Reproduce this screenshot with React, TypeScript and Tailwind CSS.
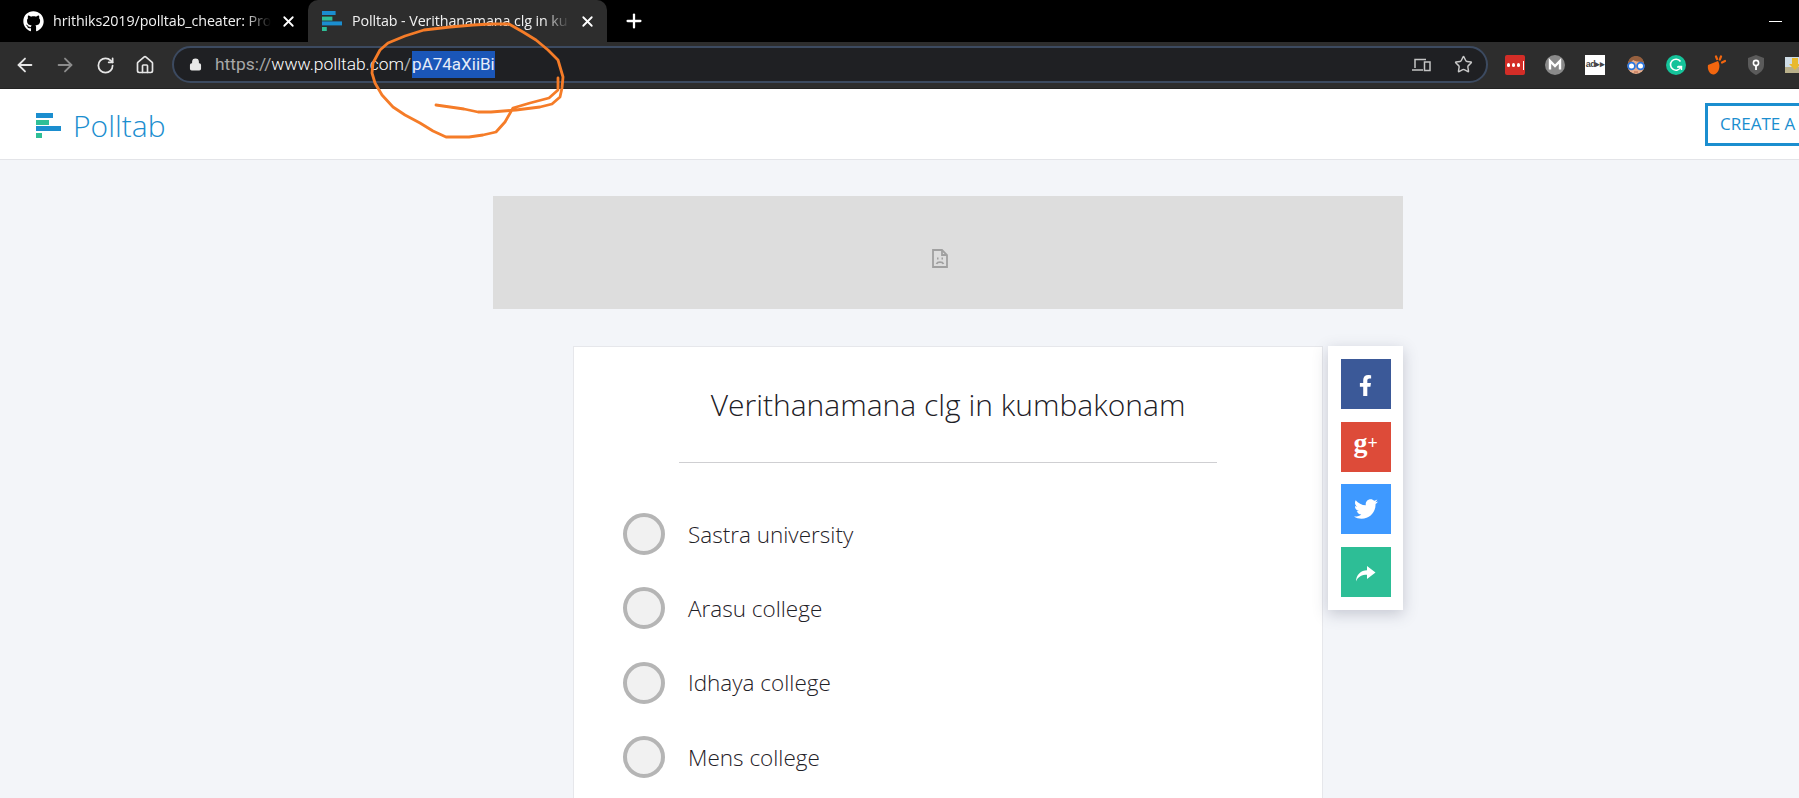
import { ArrowLeft, ArrowRight, RotateCw, Home, Lock, Plus, X, Star } from 'lucide-react';
import { FaGithub, FaFacebookF, FaTwitter } from 'react-icons/fa';

const OPTIONS = ['Sastra university', 'Arasu college', 'Idhaya college', 'Mens college'];

function Logo({ scale = 1 }: { scale?: number }) {
  return (
    <svg width={25 * scale} height={25 * scale} viewBox="0 0 25 25" className="shrink-0">
      <rect x="0" y="0" width="17" height="5" fill="#1b8ecf" />
      <rect x="0" y="7" width="13" height="5" fill="#2fbf97" />
      <rect x="0" y="13" width="25" height="5" fill="#1b8ecf" />
      <rect x="0" y="20" width="6" height="5" fill="#2fbf97" />
    </svg>
  );
}

function Tab({ icon, title, active }: { icon: React.ReactNode; title: string; active?: boolean }) {
  return (
    <div
      className={`relative flex items-center h-[42px] ${
        active ? 'w-[299px] pl-[14px] pr-[11px] bg-[#2d2d2d] rounded-t-[10px]' : 'w-[308px] pl-[15px] pr-[11px]'
      }`}
    >
      <div className={`shrink-0 flex items-center ${active ? 'w-[30px]' : 'w-[38px]'}`}>{icon}</div>
      <div className="flex-1 whitespace-nowrap text-[14.3px] text-[#f1f1f1] tracking-[-0.1px] [mask-image:linear-gradient(to_right,black_88%,transparent)]">
        {title}
      </div>
      <X size={17} strokeWidth={2.5} className="ml-[9px] text-white shrink-0" />
    </div>
  );
}

function Extensions() {
  return (
    <div className="flex items-center h-full">
      {/* lastpass */}
      <div className="w-[40px] flex justify-center">
        <div className="w-[20px] h-[20px] rounded-[2px] bg-[#d32d27] flex items-center justify-center gap-[1.5px]">
          <span className="w-[3.5px] h-[3.5px] rounded-full bg-white" />
          <span className="w-[3.5px] h-[3.5px] rounded-full bg-white" />
          <span className="w-[3.5px] h-[3.5px] rounded-full bg-white" />
          <span className="w-[1px] h-[9px] ml-[1px] bg-white" />
        </div>
      </div>
      {/* mega */}
      <div className="w-[40px] flex justify-center">
        <svg width="20" height="20" viewBox="0 0 20 20">
          <circle cx="10" cy="10" r="10" fill="#8a8a8a" />
          <path d="M5 14.5V6l5 5 5-5v8.5" fill="none" stroke="#fff" strokeWidth="2.4" />
        </svg>
      </div>
      {/* adblock */}
      <div className="w-[40px] flex justify-center">
        <div className="w-[20px] h-[20px] bg-white flex items-center justify-center overflow-hidden text-[9px] font-bold text-[#444] tracking-[-0.5px] font-['Liberation_Sans',sans-serif]">
          ad▸▸
        </div>
      </div>
      {/* glasses face */}
      <div className="w-[42px] flex justify-center">
        <svg width="20" height="20" viewBox="0 0 20 20">
          <circle cx="10" cy="10.5" r="8.5" fill="#e9ae8c" />
          <path d="M2 10C2 3 6 1 10 1s8 2 8 9l-2-3c-3 0-8-1-9-2-1 2-3 2-5 5z" fill="#96603f" />
          <circle cx="5.5" cy="11" r="3.4" fill="#fff" stroke="#2a76e0" strokeWidth="1.8" />
          <circle cx="14.5" cy="11" r="3.4" fill="#fff" stroke="#2a76e0" strokeWidth="1.8" />
          <path d="M8 17h4" stroke="#b5654a" strokeWidth="1" />
        </svg>
      </div>
      {/* grammarly */}
      <div className="w-[38px] flex justify-center">
        <svg width="20" height="20" viewBox="0 0 20 20">
          <circle cx="10" cy="10" r="10" fill="#15c39a" />
          <path d="M14.5 6.5A5.5 5.5 0 1 0 15 12h-4" fill="none" stroke="#fff" strokeWidth="1.6" />
          <path d="M15.5 15v-3.5H12" fill="none" stroke="#fff" strokeWidth="1.4" />
        </svg>
      </div>
      {/* shout */}
      <div className="w-[42px] flex justify-center">
        <svg width="19" height="20" viewBox="0 0 19 20">
          <path d="M1 10 L11 6 C14 11 12 18 7 19.5 C3 20 0 15 1 10Z" fill="#f2660f" />
          <path d="M9 1.5l1 2.5M14 1.5l-1.2 3M18 6l-3 1.5" stroke="#f2660f" strokeWidth="2.2" strokeLinecap="round" />
        </svg>
      </div>
      {/* shield */}
      <div className="w-[38px] flex justify-center">
        <svg width="18" height="20" viewBox="0 0 18 20">
          <path d="M9 0l8 3v7c0 5-4 8-8 10-4-2-8-5-8-10V3z" fill="#5b5b5b" />
          <circle cx="9" cy="8" r="2.6" fill="none" stroke="#fff" strokeWidth="1.6" />
          <path d="M9 10.5V15" stroke="#fff" strokeWidth="1.8" />
        </svg>
      </div>
      {/* picture download */}
      <div className="w-[36px] flex justify-start pl-[10px]">
        <svg width="20" height="16" viewBox="0 0 20 16" className="shrink-0">
          <rect width="20" height="16" fill="#cfdde6" />
          <rect y="10" width="20" height="6" fill="#b9b08a" />
          <path d="M7 1h6v6h3l-6 6-6-6h3z" fill="#e8b92e" />
        </svg>
      </div>
    </div>
  );
}

function Annotation() {
  return (
    <svg className="absolute left-0 top-0 pointer-events-none" width="600" height="150" fill="none">
      <polyline
        points="558,78 558,90 549,98 530,103 513,108 505,122 496,132 483,135 469,137 446,137 433,131 420,123 405,115 393,107 382,95 375,83 372,73 373,63 380,50 388,43 405,36 424,30 450,27 473,25 490,24 509,24 523,32 536,40 548,50 558,60 563,77 562,88 560,97 552,104 540,107 516,110 491,112 478,112 464,109 450,107 436,105"
        stroke="#f57c28"
        strokeWidth="2.8"
        strokeLinejoin="round"
        strokeLinecap="round"
      />
    </svg>
  );
}

function ShareButton({ color, children }: { color: string; children: React.ReactNode }) {
  return <div className={`w-[50px] h-[50px] flex items-center justify-center text-white ${color}`}>{children}</div>;
}

export default function App() {
  return (
    <div className="relative h-screen overflow-hidden bg-[#f3f5f9] font-['Open_Sans',sans-serif]">
      {/* Browser chrome */}
      <div className="h-[42px] bg-black flex items-center">
        <Tab icon={<FaGithub size={21} className="text-white ml-[8px]" />} title="hrithiks2019/polltab_cheater: Pro" />
        <Tab active icon={<Logo scale={0.8} />} title="Polltab - Verithanamana clg in ku" />
        <Plus size={22} strokeWidth={2.5} className="ml-[16px] text-white" />
        <div className="ml-auto mr-[17px] w-[13px] h-[1px] bg-white" />
      </div>
      <div className="h-[47px] bg-[#2d2d2d] border-b border-[#232323] flex items-center pl-[14px] font-['Roboto',sans-serif] overflow-hidden">
        <ArrowLeft size={22} strokeWidth={2} className="shrink-0 text-[#e6e6e6]" />
        <ArrowRight size={22} strokeWidth={2} className="shrink-0 ml-[18px] text-[#8c8c8c]" />
        <RotateCw size={19} strokeWidth={2.2} className="shrink-0 ml-[20px] text-[#e6e6e6]" />
        <Home size={20} strokeWidth={2} className="shrink-0 ml-[20px] text-[#e6e6e6]" />
        <div className="shrink-0 ml-[17px] w-[1316px] h-[37px] -mt-[1px] rounded-full bg-[#1f2023] border-[2px] border-[#3c4a60] flex items-center pl-[15px] pr-[12px]">
          <Lock size={13} strokeWidth={2.5} fill="#e8e8e8" className="text-[#e8e8e8]" />
          <span className="ml-[13px] text-[17.4px] text-[#a8a8a8] whitespace-nowrap">https://</span>
          <span className="text-[17.4px] text-white font-light whitespace-nowrap">www.polltab.com</span>
          <span className="text-[17.4px] text-[#a8a8a8]">/</span>
          <span className="ml-[1px] h-[27px] leading-[27px] bg-[#1a56b8] text-[17px] text-[#e6ecf8] whitespace-nowrap">pA74aXiiBi</span>
          <svg width="19" height="14" viewBox="0 0 19 14" fill="none" stroke="#c4c4c4" strokeWidth="1.5" className="ml-auto mr-[23px]">
            <path d="M3 10V1.5h11M0 12h11" />
            <rect x="12.5" y="4" width="5.5" height="8.5" />
          </svg>
          <Star size={19} strokeWidth={1.8} className="text-[#c8c8c8] mr-[1px]" />
        </div>
        <div className="shrink-0 ml-[7px] h-full">
          <Extensions />
        </div>
      </div>

      {/* Page */}
      <div className="w-[1896px]">
        <header className="h-[71px] bg-white border-b border-[#e3e4e8] flex items-center pl-[36px]">
          <div className="flex items-center pt-[3px]">
            <Logo />
            <span className="ml-[12px] text-[30px] font-light text-[#1b8ecf] leading-none">Polltab</span>
          </div>
          <div className="ml-auto mr-[31px] w-[160px] h-[43px] border-[3px] border-[#1b8ecf] flex items-center px-[12px] text-[17px] text-[#1b8ecf] whitespace-nowrap">
            CREATE A
          </div>
        </header>

        <main className="mt-[36px] w-[910px] mx-auto">
          <div className="h-[113px] bg-[#dddddd] flex items-center justify-center pt-[12px] pr-[16px]">
            <svg width="16" height="19" viewBox="0 0 16 19" fill="none" stroke="#a0a0a0" strokeWidth="1.8">
              <path d="M1 1h9l5 5v12H1z" />
              <path d="M10 1v5h5" />
              <path d="M4.5 15c1-2.4 6-2.4 7 0" />
              <path d="M5 9.5h1.5M9.5 9.5H11" />
            </svg>
          </div>

          <div className="mt-[37px] pl-[80px] flex items-start gap-[5px]">
            <div className="w-[751px] h-[600px] bg-white border border-[#e6e7eb] pt-[36px] px-[105px]">
              <h1 className="text-center text-[30px] leading-[44px] font-light text-[#1d2026] whitespace-nowrap">
                Verithanamana clg in kumbakonam
              </h1>
              <div className="mt-[35px] h-[1px] bg-[#cfcfd2]" />
              <div className="mt-[50px] -ml-[56px] flex flex-col gap-[32.4px]">
                {OPTIONS.map((option) => (
                  <div key={option} className="flex items-center h-[42px]">
                    <span className="w-[42px] h-[42px] rounded-full bg-[#f1f1f1] border-[4px] border-[#b5b5b5] shrink-0" />
                    <span className="ml-[23px] pt-[1px] text-[22.5px] font-light text-[#1f2127] whitespace-nowrap">{option}</span>
                  </div>
                ))}
              </div>
            </div>

            <div className="w-[75px] h-[264px] bg-white shadow-[0_4px_14px_rgba(60,64,90,0.25)] pt-[13px] flex flex-col items-center gap-[12.5px]">
              <ShareButton color="bg-[#3b5998]">
                <FaFacebookF size={21} className="mt-[3px]" />
              </ShareButton>
              <ShareButton color="bg-[#dd4b39]">
                <span className="flex items-start font-['Liberation_Serif',serif] font-bold leading-none">
                  <span className="text-[28px] -mt-[8px]">g</span>
                  <span className="text-[18px] -mt-[3px]">+</span>
                </span>
              </ShareButton>
              <ShareButton color="bg-[#3e99ff]">
                <FaTwitter size={24} />
              </ShareButton>
              <ShareButton color="bg-[#2dbe96]">
                <svg width="20" height="16" viewBox="0 0 20 16" fill="currentColor" className="mt-[4px]">
                  <path d="M11 0L19.5 6.5 11 13V8.8C6 8.8 2 10.5 0 15.5 0 9 5 4.2 11 4.2Z" />
                </svg>
              </ShareButton>
            </div>
          </div>
        </main>
      </div>

      <Annotation />
    </div>
  );
}
